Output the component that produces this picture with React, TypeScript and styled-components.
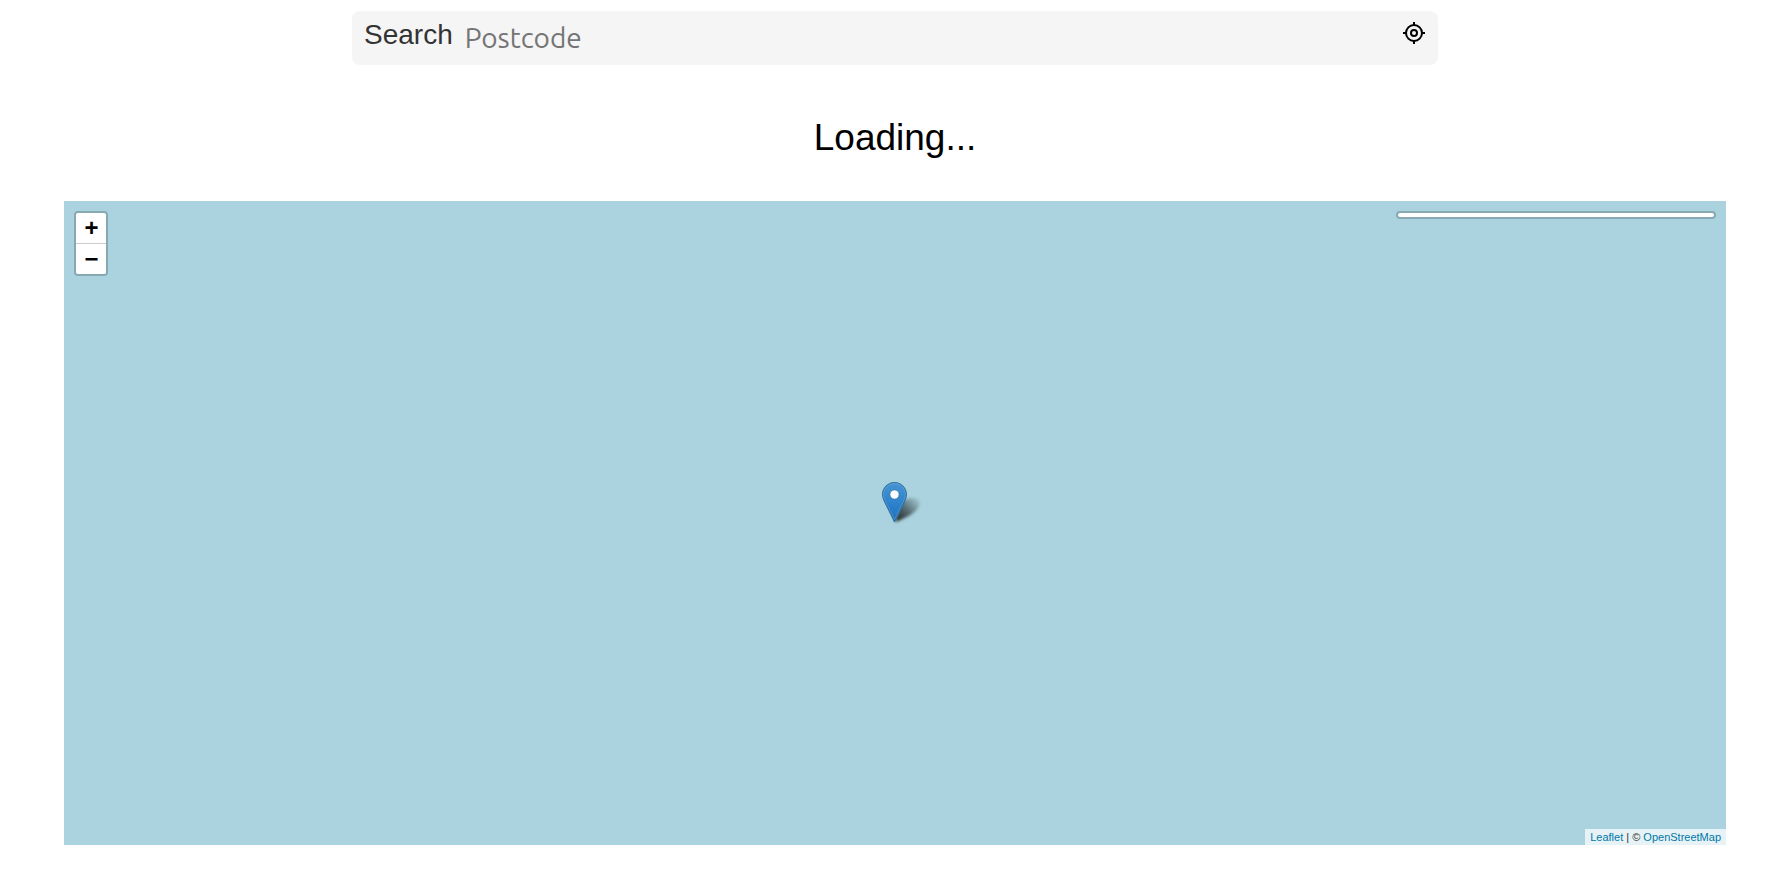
import React from "react";
import styled, { createGlobalStyle } from "styled-components";

const GlobalStyle = createGlobalStyle`
  *, *::before, *::after { box-sizing: border-box; }
  html, body, #root { height: 100%; }
  body {
    margin: 0;
    background: #fff;
    color: #000;
    font-family: "Liberation Sans", Arial, sans-serif;
  }
`;

const Page = styled.main`
  display: flex;
  flex-direction: column;
  min-height: 100%;
  padding: 11px 46px 46px 64px;
`;

const SearchBar = styled.form`
  display: flex;
  align-items: flex-start;
  align-self: center;
  width: 100%;
  max-width: 1086px;
  height: 54px;
  padding: 0 12px;
  border-radius: 8px;
  background: #f5f5f5;
`;

const SearchLabel = styled.label`
  color: #333;
  font-size: 28px;
  line-height: 48px;
`;

const SearchInput = styled.input`
  flex: 1;
  min-width: 0;
  height: 52px;
  margin-left: 12px;
  padding: 0;
  border: 0;
  outline: 0;
  background: transparent;
  color: #333;
  font-family: Ubuntu, "Noto Sans", sans-serif;
  font-size: 28px;

  &::placeholder { color: #757575; opacity: 1; }
`;

const LocateButton = styled.button`
  display: flex;
  padding: 10px 0;
  border: 0;
  background: transparent;
  color: #000;
  cursor: pointer;
`;

const Status = styled.p`
  margin: 0;
  padding: 48px 0 38px;
  font-size: 37px;
  line-height: 50px;
  text-align: center;
`;

const Map = styled.section`
  position: relative;
  flex: 1;
  min-height: 320px;
  background: #aad3df;
`;

const ZoomControl = styled.div`
  position: absolute;
  top: 10px;
  left: 10px;
  display: flex;
  flex-direction: column;
  border: 2px solid rgba(0, 0, 0, 0.2);
  border-radius: 4px;
  background-clip: padding-box;
`;

const ZoomButton = styled.button`
  width: 30px;
  height: 30px;
  padding: 0;
  border: 0;
  border-radius: 0 0 2px 2px;
  background: #fff;
  color: #000;
  font: bold 24px/30px "Liberation Sans", Arial, sans-serif;
  text-indent: 1px;
  cursor: pointer;

  &:first-child {
    height: 31px;
    border-bottom: 1px solid #ccc;
    border-radius: 2px 2px 0 0;
  }
`;

const LayersPanel = styled.div`
  position: absolute;
  top: 10px;
  right: 10px;
  width: 320px;
  height: 8px;
  border: 2px solid rgba(0, 0, 0, 0.2);
  border-radius: 4px;
  background: #fff;
  background-clip: padding-box;
`;

const Marker = styled.svg`
  position: absolute;
  top: calc(50% - 41px);
  left: calc(50% - 13px);
  overflow: visible;
`;

const Attribution = styled.div`
  position: absolute;
  right: 0;
  bottom: 0;
  padding: 0 5px;
  background: rgba(255, 255, 255, 0.7);
  color: #333;
  font-size: 11px;
  line-height: 16px;
`;

const MapLink = styled.a`
  color: #0078a8;
  text-decoration: none;
`;

function LocateIcon() {
  return (
    <svg width="24" height="24" viewBox="0 0 24 24" fill="none" stroke="currentColor" strokeWidth="2" aria-hidden="true">
      <circle cx="12" cy="12" r="8" />
      <circle cx="12" cy="12" r="3" />
      <path d="M12 1v3M12 20v3M1 12h3M20 12h3" />
    </svg>
  );
}

function MapMarker() {
  return (
    <Marker width="41" height="41" viewBox="0 0 41 41" role="img" aria-label="Selected location">
      <defs>
        <linearGradient id="pin" x1="0" y1="0" x2="0" y2="1">
          <stop offset="0" stopColor="#4694d2" />
          <stop offset="0.6" stopColor="#2b7fca" />
          <stop offset="1" stopColor="#2272bc" />
        </linearGradient>
        <linearGradient id="shade" gradientUnits="userSpaceOnUse" x1="13" y1="40" x2="36" y2="17">
          <stop offset="0" stopColor="#000" stopOpacity="0.85" />
          <stop offset="0.5" stopColor="#000" stopOpacity="0.5" />
          <stop offset="1" stopColor="#000" stopOpacity="0.05" />
        </linearGradient>
        <filter id="soft" x="-30%" y="-30%" width="160%" height="160%">
          <feGaussianBlur stdDeviation="1.6" />
        </filter>
      </defs>
      <path d="M13 40 L18 22 C24 14 38 15 38 20 C38 29 25 36 13 40Z" fill="url(#shade)" filter="url(#soft)" />
      <path d="M12.5 .5 C5.8 .5 .5 6 .5 12.5 C.5 15.2 1.6 18 3 20.8 L12.5 40 L22 20.8 C23.4 18 24.5 15.2 24.5 12.5 C24.5 6 19.2 .5 12.5 .5Z" fill="url(#pin)" stroke="#2e6c97" />
      <path d="M12.5 1.6 C6.4 1.6 1.6 6.6 1.6 12.5 C1.6 15 2.6 17.6 4 20.3 L12.5 37.5 L21 20.3 C22.4 17.6 23.4 15 23.4 12.5 C23.4 6.6 18.6 1.6 12.5 1.6Z" fill="none" stroke="#fff" strokeOpacity="0.13" />
      <circle cx="12.5" cy="12.5" r="4.5" fill="#fff" stroke="#2e6c97" strokeOpacity="0.5" />
    </Marker>
  );
}

export default function App() {
  return (
    <>
      <GlobalStyle />
      <Page>
        <SearchBar onSubmit={(event: React.FormEvent) => event.preventDefault()}>
          <SearchLabel htmlFor="postcode">Search</SearchLabel>
          <SearchInput id="postcode" type="text" placeholder="Postcode" />
          <LocateButton type="button" aria-label="Use my location">
            <LocateIcon />
          </LocateButton>
        </SearchBar>
        <Status role="status">Loading...</Status>
        <Map aria-label="Map">
          <ZoomControl>
            <ZoomButton type="button" aria-label="Zoom in">+</ZoomButton>
            <ZoomButton type="button" aria-label="Zoom out">−</ZoomButton>
          </ZoomControl>
          <LayersPanel />
          <MapMarker />
          <Attribution>
            <MapLink href="https://leafletjs.com">Leaflet</MapLink> | ©{" "}
            <MapLink href="https://www.openstreetmap.org/copyright">OpenStreetMap</MapLink>
          </Attribution>
        </Map>
      </Page>
    </>
  );
}
